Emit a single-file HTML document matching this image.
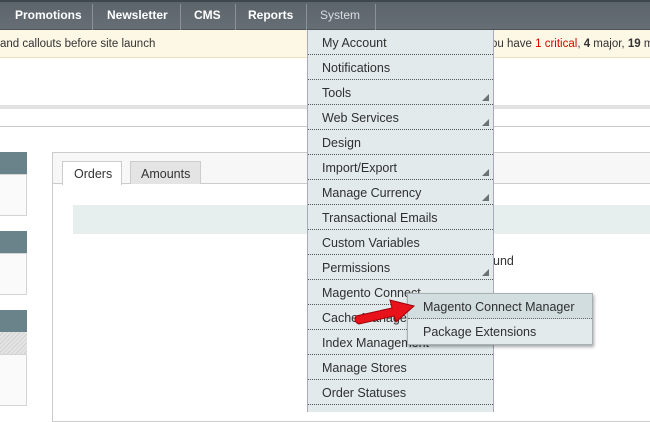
<!DOCTYPE html>
<html><head><style>
*{margin:0;padding:0;box-sizing:border-box}
body{width:650px;height:412px;overflow:hidden;background:#fff;font-family:"Liberation Sans",Arial,sans-serif;position:relative;font-size:12px}
.nav{position:absolute;left:0;top:0;width:650px;height:30px;background:linear-gradient(#5d656c,#666e75);border-top:2px solid #3d474e;border-bottom:1px solid #4c545a}
.nav span{position:absolute;top:6px;color:#fff;font-weight:bold;font-size:12px}
.sep{position:absolute;top:2px;width:1px;height:26px;background:#8a9197}
.notice{position:absolute;left:0;top:30px;width:650px;height:28px;background:#fdf7e6;border-bottom:1px solid #eadfc1;font-size:11.5px;color:#333;white-space:nowrap;overflow:hidden}
.notice span{position:absolute;top:8px}
.menu{position:absolute;left:307px;top:30px;width:187px;height:382px;background:#e2eaeb;border-left:1px solid #aab;border-right:1px solid #aab}
.menu div{height:25px;border-bottom:1px dotted #555;padding:6px 0 0 14px;font-size:12.5px;color:#2f2f2f;position:relative}
.ar{position:absolute;right:4px;bottom:3px;width:0;height:0;border-left:7px solid transparent;border-bottom:7px solid #6c7175}
.sub{position:absolute;left:407px;top:293px;width:186px;height:52px;background:#e2eaeb;border:1px solid #a9b0b3;box-shadow:1px 2px 3px rgba(0,0,0,.35)}
.sub div{height:25px;padding:6px 0 0 15px;font-size:12.5px;color:#2f2f2f}
</style></head><body>
<div class="nav">
<span style="left:15px">Promotions</span><div class="sep" style="left:92px"></div>
<span style="left:107px">Newsletter</span><div class="sep" style="left:180px"></div>
<span style="left:194px">CMS</span><div class="sep" style="left:235px"></div>
<span style="left:248px">Reports</span><div class="sep" style="left:306px"></div>
<span style="left:320px;color:#d8dde0;font-weight:normal">System</span><div class="sep" style="left:375px"></div>
</div>
<div class="notice"><span style="left:0">and callouts before site launch</span><span style="left:491px">ou have <b style="color:#d00;font-weight:normal">1 critical</b>, <b>4</b> major, <b>19</b> min</span></div>
<div style="position:absolute;left:0;top:105px;width:650px;height:4px;background:#e2e2e2"></div>
<div style="position:absolute;left:0;top:126px;width:650px;height:1px;background:#c8c8c8"></div>
<div style="position:absolute;left:0;top:152px;width:27px;height:22px;background:#6a838b"></div>
<div style="position:absolute;left:0;top:174px;width:27px;height:42px;background:#fafafa;border:1px solid #d4d4d4;border-left:none"></div>
<div style="position:absolute;left:0;top:231px;width:27px;height:22px;background:#6a838b"></div>
<div style="position:absolute;left:0;top:253px;width:27px;height:42px;background:#fafafa;border:1px solid #d4d4d4;border-left:none"></div>
<div style="position:absolute;left:0;top:310px;width:27px;height:22px;background:#6a838b"></div>
<div style="position:absolute;left:0;top:332px;width:27px;height:22px;background:repeating-linear-gradient(135deg,#e4e4e4 0 2px,#d0d0d0 2px 3px)"></div>
<div style="position:absolute;left:0;top:354px;width:27px;height:52px;background:#fafafa;border:1px solid #d4d4d4;border-left:none"></div>
<div style="position:absolute;left:52px;top:152px;width:620px;height:270px;border:1px solid #ccc;background:#fff"></div>
<div style="position:absolute;left:53px;top:153px;width:600px;height:31px;background:#f7f7f7;border-bottom:1px solid #ccc"></div>
<div style="position:absolute;left:62px;top:161px;width:60px;height:24px;background:#fff;border:1px solid #ccc;border-bottom:none;padding:5px 0 0 11px;font-size:12.5px;color:#333">Orders</div>
<div style="position:absolute;left:130px;top:161px;width:71px;height:23px;background:#e4e4e4;border:1px solid #ccc;border-bottom:none;padding:5px 0 0 10px;font-size:12.5px;color:#333">Amounts</div>
<div style="position:absolute;left:73px;top:205px;width:577px;height:29px;background:#e6eeee"></div>
<div style="position:absolute;left:493px;top:254px;font-size:12.5px;color:#333">und</div>
<div class="menu">
<div>My Account</div><div>Notifications</div><div>Tools<i class="ar"></i></div><div>Web Services<i class="ar"></i></div><div>Design</div><div>Import/Export<i class="ar"></i></div><div>Manage Currency<i class="ar"></i></div><div>Transactional Emails</div><div>Custom Variables</div><div>Permissions<i class="ar"></i></div><div>Magento Connect</div><div>Cache Management</div><div>Index Management</div><div>Manage Stores</div><div>Order Statuses</div>
</div>
<div class="sub"><div style="background:#d2dde0;border-bottom:1px dotted #666">Magento Connect Manager</div><div>Package Extensions</div></div>
<svg style="position:absolute;left:350px;top:296px" width="70" height="32" viewBox="0 0 70 32">
<path d="M6 20 L42 12 L40 4 L64 10 L46 26 L44 20 L9 28 Q3 26 6 20 Z" fill="#e8131a" stroke="#9a0008" stroke-width="1"/>
</svg>
</body></html>
